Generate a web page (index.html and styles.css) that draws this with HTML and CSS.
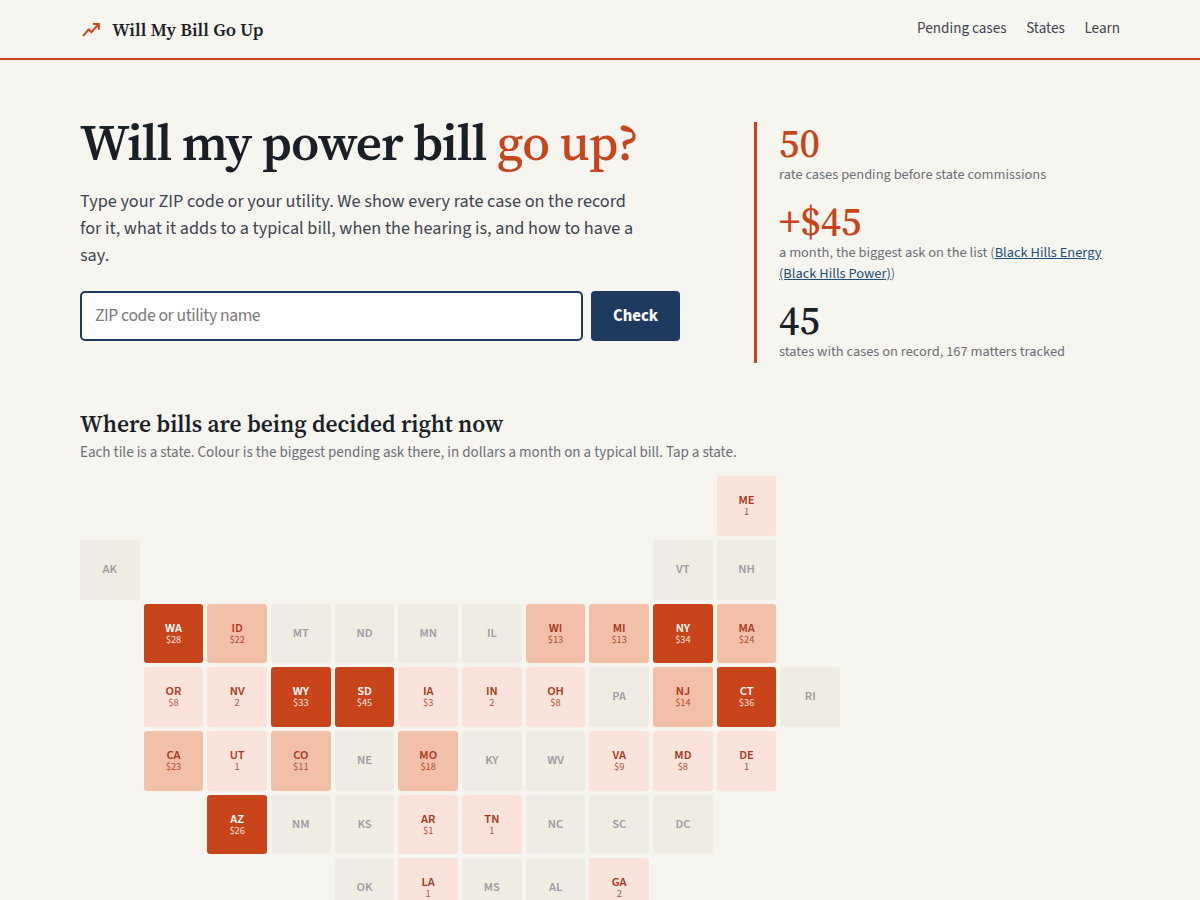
FILE: index.html
```html
<!DOCTYPE html>
<html lang="en">
<head>
<meta charset="utf-8">
<title>Will My Bill Go Up</title>
<link rel="stylesheet" href="styles.css">
</head>
<body>
<header class="topbar">
  <div class="topbar-inner">
    <a class="brand" href="#">
      <svg class="brand-icon" viewBox="0 0 24 24" width="22" height="22" fill="none" stroke="currentColor" stroke-width="2.2" stroke-linecap="round" stroke-linejoin="round"><path d="M4 18L9.3 11.2l3.2 3.2L20.5 5.5"/><path d="M15 5.5h5.5V11"/></svg>
      <span>Will My Bill Go Up</span>
    </a>
    <nav class="nav">
      <a href="#">Pending cases</a>
      <a href="#">States</a>
      <a href="#">Learn</a>
    </nav>
  </div>
</header>
<main class="page">
  <section class="hero">
    <div class="hero-main">
      <h1>Will my power bill <em>go up?</em></h1>
      <p class="lede">Type your ZIP code or your utility. We show every rate case on the record for it, what it adds to a typical bill, when the hearing is, and how to have a say.</p>
      <form class="search">
        <input class="search-input" type="text" placeholder="ZIP code or utility name">
        <button class="search-btn" type="button">Check</button>
      </form>
    </div>
    <aside class="stats">
      <div class="stat">
        <div class="stat-num accent">50</div>
        <div class="stat-label">rate cases pending before state commissions</div>
      </div>
      <div class="stat">
        <div class="stat-num accent">+$45</div>
        <div class="stat-label">a month, the biggest ask on the list (<a href="#">Black Hills Energy (Black Hills Power)</a>)</div>
      </div>
      <div class="stat">
        <div class="stat-num">45</div>
        <div class="stat-label">states with cases on record, 167 matters tracked</div>
      </div>
    </aside>
  </section>
  <section class="map-section">
    <h2>Where bills are being decided right now</h2>
    <p class="map-sub">Each tile is a state. Colour is the biggest pending ask there, in dollars a month on a typical bill. Tap a state.</p>
    <div class="tilemap">
      <a class="tile t1 c11"><b>ME</b><small>1</small></a>

      <a class="tile t0 c1"><b>AK</b></a>
      <a class="tile t0 c10"><b>VT</b></a>
      <a class="tile t0 c11"><b>NH</b></a>

      <a class="tile t3 c2"><b>WA</b><small>$28</small></a>
      <a class="tile t2"><b>ID</b><small>$22</small></a>
      <a class="tile t0"><b>MT</b></a>
      <a class="tile t0"><b>ND</b></a>
      <a class="tile t0"><b>MN</b></a>
      <a class="tile t0"><b>IL</b></a>
      <a class="tile t2"><b>WI</b><small>$13</small></a>
      <a class="tile t2"><b>MI</b><small>$13</small></a>
      <a class="tile t3"><b>NY</b><small>$34</small></a>
      <a class="tile t2"><b>MA</b><small>$24</small></a>

      <a class="tile t1 c2"><b>OR</b><small>$8</small></a>
      <a class="tile t1"><b>NV</b><small>2</small></a>
      <a class="tile t3"><b>WY</b><small>$33</small></a>
      <a class="tile t3"><b>SD</b><small>$45</small></a>
      <a class="tile t1"><b>IA</b><small>$3</small></a>
      <a class="tile t1"><b>IN</b><small>2</small></a>
      <a class="tile t1"><b>OH</b><small>$8</small></a>
      <a class="tile t0"><b>PA</b></a>
      <a class="tile t2"><b>NJ</b><small>$14</small></a>
      <a class="tile t3"><b>CT</b><small>$36</small></a>
      <a class="tile t0"><b>RI</b></a>

      <a class="tile t2 c2"><b>CA</b><small>$23</small></a>
      <a class="tile t1"><b>UT</b><small>1</small></a>
      <a class="tile t2"><b>CO</b><small>$11</small></a>
      <a class="tile t0"><b>NE</b></a>
      <a class="tile t2"><b>MO</b><small>$18</small></a>
      <a class="tile t0"><b>KY</b></a>
      <a class="tile t0"><b>WV</b></a>
      <a class="tile t1"><b>VA</b><small>$9</small></a>
      <a class="tile t1"><b>MD</b><small>$8</small></a>
      <a class="tile t1"><b>DE</b><small>1</small></a>

      <a class="tile t3 c3"><b>AZ</b><small>$26</small></a>
      <a class="tile t0"><b>NM</b></a>
      <a class="tile t0"><b>KS</b></a>
      <a class="tile t1"><b>AR</b><small>$1</small></a>
      <a class="tile t1"><b>TN</b><small>1</small></a>
      <a class="tile t0"><b>NC</b></a>
      <a class="tile t0"><b>SC</b></a>
      <a class="tile t0"><b>DC</b></a>

      <a class="tile t0 c5"><b>OK</b></a>
      <a class="tile t1"><b>LA</b><small>1</small></a>
      <a class="tile t0"><b>MS</b></a>
      <a class="tile t0"><b>AL</b></a>
      <a class="tile t1"><b>GA</b><small>2</small></a>
    </div>
  </section>
</main>
</body>
</html>
```
FILE: styles.css
```css
* { box-sizing: border-box; }
html, body { margin: 0; padding: 0; }
body {
  background: #f7f5f0;
  color: #1a1f26;
  font-family: "Source Sans 3", "Noto Sans", sans-serif;
  font-size: 17px;
  line-height: 1.6;
}
a { color: inherit; text-decoration: none; }
.topbar { border-bottom: 2px solid #c8451b; }
.topbar-inner {
  max-width: 1040px;
  height: 58px;
  margin: 0 auto;
  display: flex;
  align-items: center;
  justify-content: space-between;
}
.brand {
  display: flex;
  align-items: center;
  gap: 10px;
  margin-top: 2px;
  font-family: "Source Serif 4", "Liberation Serif", serif;
  font-weight: 600;
  font-size: 18.4px;
}
.brand-icon { color: #c8451b; flex: none; }
.nav { display: flex; gap: 19.7px; font-size: 15.1px; color: #3d4550; }
.page { max-width: 1040px; margin: 0 auto; }
.hero {
  display: grid;
  grid-template-columns: 600px 366px;
  justify-content: space-between;
  padding-top: 54px;
}
h1 {
  margin: 0;
  font-family: "Source Serif 4", "Liberation Serif", serif;
  font-weight: 600;
  font-size: 51px;
  line-height: 1.1;
  letter-spacing: -1px;
  white-space: nowrap;
}
h1 em { font-style: normal; font-weight: 500; color: #c8451b; }
.lede { margin: 17.5px 0 0; font-size: 18.2px; line-height: 27px; color: #3d4550; max-width: 560px; }
.search { display: flex; gap: 8px; margin-top: 22px; }
.search-input {
  flex: 1;
  height: 50px;
  min-width: 0;
  padding: 0 13px;
  border: 2px solid #1f3a5f;
  border-radius: 5px;
  background: #fff;
  font: inherit;
  font-size: 17.6px;
  letter-spacing: -0.37px;
  color: #1a1f26;
}
.search-input::placeholder { color: #7a7a7a; }
.search-btn {
  height: 50px;
  padding: 1px 22px 0;
  border: 0;
  border-radius: 4px;
  background: #1f3a5f;
  color: #fff;
  font: inherit;
  font-size: 16.8px;
  font-weight: 700;
}
.stats {
  border-left: 3px solid #c8451b;
  padding: 0 0 1px 22px;
  margin-top: 8px;
  align-self: start;
}
.stat + .stat { margin-top: 15px; }
.stat-num {
  font-family: "Source Serif 4", "Liberation Serif", serif;
  font-weight: 500;
  font-size: 40px;
  line-height: 42px;
}
.accent { color: #c8451b; }
.stat-label { font-size: 14.4px; line-height: 21px; color: #6b6f76; }
.stat-label a { color: #1d4e75; text-decoration: underline; }
.map-section { margin-top: 45px; }
h2 {
  margin: 0;
  font-family: "Source Serif 4", "Liberation Serif", serif;
  font-weight: 600;
  font-size: 23.4px;
  line-height: 33px;
}
.map-sub { margin: 0 0 11.3px; font-size: 15.05px; line-height: 24px; color: #6b6f76; }
.tilemap {
  display: grid;
  grid-template-columns: repeat(12, 1fr);
  gap: 4px;
  max-width: 760px;
}
.tile {
  aspect-ratio: 1;
  display: flex;
  flex-direction: column;
  align-items: center;
  justify-content: center;
  padding-bottom: 1.5px;
  border-radius: 3px;
  font-size: 12.5px;
  line-height: 14px;
}
.tile b { font-weight: 600; }
.tile small { font-size: 10.4px; line-height: 10px; opacity: 0.85; }
.t0 { background: #efece4; color: #9b9ea2; }
.t1 { background: #fae3da; color: #a8391a; }
.t2 { background: #f2bfa8; color: #a8391a; }
.t3 { background: #c8451b; color: #fff; }
.c1 { grid-column-start: 1; }
.c2 { grid-column-start: 2; }
.c3 { grid-column-start: 3; }
.c5 { grid-column-start: 5; }
.c10 { grid-column-start: 10; }
.c11 { grid-column-start: 11; }
```
